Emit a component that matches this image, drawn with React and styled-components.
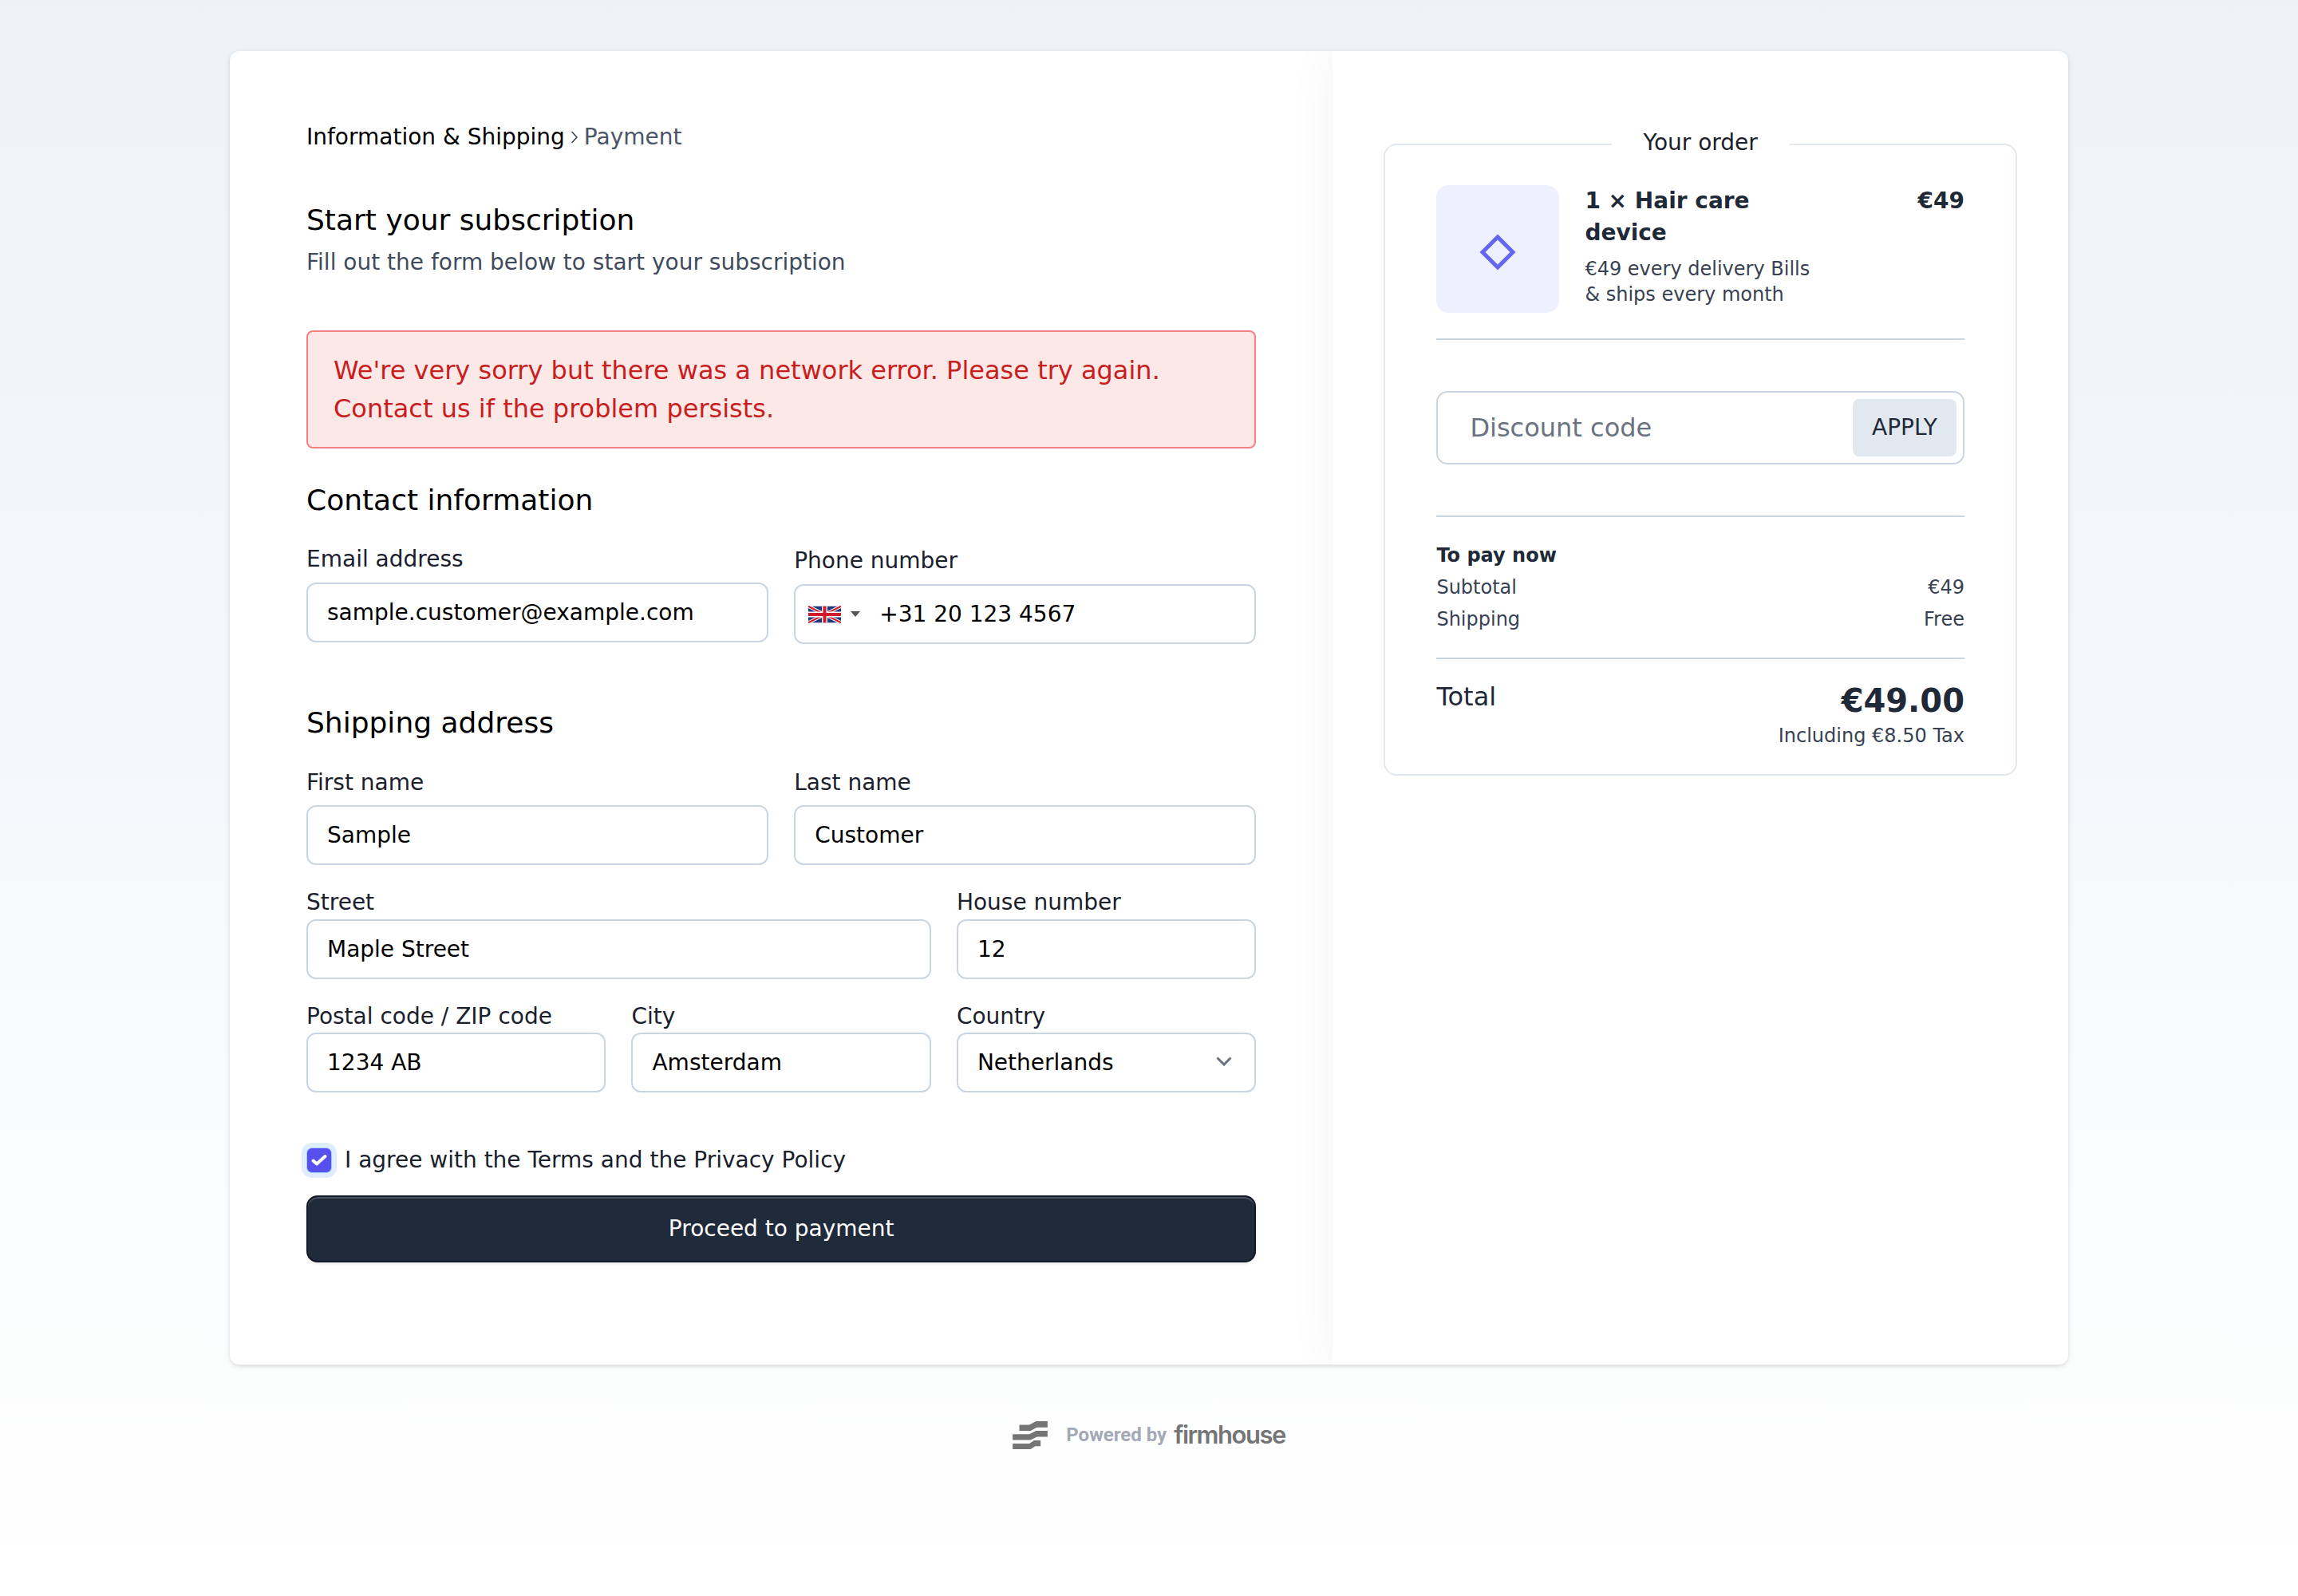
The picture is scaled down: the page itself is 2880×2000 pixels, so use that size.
// App.jsx
import React from "react";
import styled, { createGlobalStyle } from "styled-components";

const GlobalStyle = createGlobalStyle`
  * { box-sizing: border-box; }
  body {
    margin: 0;
    font-family: "DejaVu Sans", sans-serif;
    color: #1a202c;
  }
`;

const Page = styled.div`
  min-height: 2000px;
  padding-top: 64px;
  background: linear-gradient(180deg, #edf2f7 0%, #ffffff 100%);
`;

const Card = styled.main`
  width: 2304px;
  margin: 0 auto;
  display: flex;
  background: #fff;
  border-radius: 12px;
  box-shadow: 0 2px 6px rgba(0, 0, 0, 0.1), 0 2px 4px rgba(0, 0, 0, 0.06);
  overflow: hidden;
`;

/* Left column: the form */
const FormColumn = styled.section`
  width: 60%;
  padding: 88px 96px 128px;
`;

const Breadcrumb = styled.nav`
  display: flex;
  align-items: center;
  gap: 7px;
  font-size: 28px;
  line-height: 40px;
  color: #000;
`;

const Crumb = styled.span`
  color: ${(p) => (p.$muted ? "#4a5568" : "#000")};
`;

const Heading = styled.h2`
  margin: ${(p) => p.$top}px 0 0;
  font-size: 36px;
  line-height: 56px;
  font-weight: 400;
  color: #000;
`;

const Subtitle = styled.p`
  margin: 5px 0 0;
  font-size: 28px;
  line-height: 40px;
  color: #3f4b5c;
`;

const Alert = styled.div`
  margin-top: 65px;
  padding: 24px 32px;
  border: 2px solid #f98080;
  border-radius: 8px;
  background: #fde8e8;
  color: #c81e1e;
  font-size: 32px;
  line-height: 48px;
`;

const FieldGrid = styled.div`
  display: grid;
  grid-template-columns: repeat(6, 1fr);
  column-gap: 32px;
  row-gap: 27px;
  margin-top: ${(p) => p.$top}px;
`;

const Field = styled.div`
  grid-column: span ${(p) => p.$span};
  padding-top: ${(p) => p.$offset || 0}px;
`;

const Label = styled.label`
  display: block;
  margin-bottom: ${(p) => p.$gap}px;
  font-size: 28px;
  line-height: 40px;
  color: #1a202c;
`;

const TextInput = styled.input`
  display: block;
  width: 100%;
  height: 75px;
  padding: 0 24px;
  border: 2px solid #cbd5e0;
  border-radius: 12px;
  background: #fff;
  color: #000;
  font: 28px/40px "DejaVu Sans", sans-serif;
  outline: none;
`;

const PhoneBox = styled.div`
  display: flex;
  align-items: center;
  height: 75px;
  padding: 0 14px 0 16px;
  border: 2px solid #cbd5e0;
  border-radius: 12px;
`;

const FlagButton = styled.div`
  display: flex;
  align-items: center;
  gap: 12px;
  margin-right: 24px;
`;

const Caret = styled.span`
  width: 0;
  height: 0;
  border-left: 6px solid transparent;
  border-right: 6px solid transparent;
  border-top: 7px solid #555;
`;

const PhoneInput = styled.input`
  flex: 1;
  min-width: 0;
  padding: 0;
  border: 0;
  color: #000;
  font: 28px/40px "DejaVu Sans", sans-serif;
  outline: none;
`;

const SelectWrap = styled.div`
  position: relative;
`;

const Select = styled.select`
  display: block;
  width: 100%;
  height: 75px;
  padding: 0 24px;
  border: 2px solid #cbd5e0;
  border-radius: 12px;
  background: #fff;
  color: #000;
  font: 28px/40px "DejaVu Sans", sans-serif;
  appearance: none;
  outline: none;
`;

const SelectChevron = styled.svg`
  position: absolute;
  top: 30px;
  right: 30px;
  pointer-events: none;
`;

const AgreeRow = styled.label`
  display: flex;
  align-items: center;
  gap: 17px;
  margin-top: 65px;
  font-size: 28px;
  line-height: 40px;
  color: #1a202c;
`;

const CheckBox = styled.span`
  display: flex;
  align-items: center;
  justify-content: center;
  width: 30px;
  height: 30px;
  margin-left: 1px;
  border-radius: 6px;
  background: #5850ec;
  box-shadow: 0 0 0 1px #a4cafe, 0 0 0 7px rgba(164, 202, 254, 0.35);
`;

const SubmitButton = styled.button`
  display: block;
  width: 100%;
  height: 84px;
  margin-top: 24px;
  border: 2px solid #111827;
  border-radius: 14px;
  background: #1f2a3a;
  box-shadow: inset 0 2px 0 rgba(255, 255, 255, 0.2), 0 2px 4px rgba(0, 0, 0, 0.08);
  color: #fff;
  font: 28px/40px "DejaVu Sans", sans-serif;
`;

/* Right column: order summary */
const SummaryColumn = styled.aside`
  width: 40%;
  padding: 95px 64px 96px;
  box-shadow: 0 0 56px rgba(0, 0, 0, 0.06);
`;

const OrderBox = styled.fieldset`
  margin: 0;
  padding: 29px 64px 32px;
  border: 2px solid #e2e8f0;
  border-radius: 16px;
`;

const OrderLegend = styled.legend`
  margin: 0 auto;
  padding: 0 40px 4px;
  font-size: 28px;
  line-height: 40px;
  color: #1a202c;
`;

const ProductRow = styled.div`
  display: flex;
  align-items: flex-start;
  padding-bottom: 32px;
  border-bottom: 2px solid #cbd5e0;
`;

const ProductImage = styled.div`
  flex: none;
  display: flex;
  align-items: center;
  justify-content: center;
  width: 154px;
  height: 160px;
  padding-top: 7px;
  border-radius: 16px;
  background: #edf0fd;
`;

const ProductText = styled.div`
  width: 300px;
  margin-left: 32px;
`;

const ProductName = styled.div`
  font-size: 28px;
  line-height: 40px;
  font-weight: 700;
  color: #1f2937;
`;

const ProductNote = styled.div`
  margin-top: 9px;
  font-size: 24px;
  line-height: 32px;
  color: #374151;
`;

const ProductPrice = styled(ProductName)`
  margin-left: auto;
`;

const DiscountBox = styled.div`
  display: flex;
  align-items: center;
  height: 92px;
  margin: 64px 0;
  padding: 0 8px 0 40px;
  border: 2px solid #cbd5e0;
  border-radius: 14px;
`;

const DiscountInput = styled.input`
  flex: 1;
  min-width: 0;
  padding: 0;
  border: 0;
  font: 32px/48px "DejaVu Sans", sans-serif;
  outline: none;
  &::placeholder {
    color: #6b7280;
    opacity: 1;
  }
`;

const ApplyButton = styled.button`
  width: 130px;
  height: 72px;
  padding: 0;
  border: 0;
  border-radius: 8px;
  background: #e2e8f0;
  color: #1f2937;
  font: 28px/40px "DejaVu Sans", sans-serif;
`;

const Totals = styled.div`
  padding: 28px 0 28px;
  border-top: 2px solid #cbd5e0;
  border-bottom: 2px solid #cbd5e0;
`;

const TotalsTitle = styled.div`
  font-size: 24px;
  line-height: 40px;
  font-weight: 700;
  color: #1f2937;
`;

const TotalsRow = styled.div`
  display: flex;
  justify-content: space-between;
  font-size: 24px;
  line-height: 40px;
  color: #374151;
`;

const GrandTotal = styled.div`
  display: flex;
  justify-content: space-between;
  align-items: flex-start;
  padding-top: 24px;
`;

const GrandLabel = styled.div`
  font-size: 32px;
  line-height: 46px;
  color: #1f2937;
`;

const GrandAmount = styled.div`
  text-align: right;
`;

const AmountValue = styled.div`
  font-size: 40px;
  line-height: 56px;
  font-weight: 700;
  color: #1f2937;
`;

const AmountNote = styled.div`
  font-size: 24px;
  line-height: 32px;
  color: #374151;
`;

/* Footer */
const Footer = styled.footer`
  display: flex;
  align-items: center;
  justify-content: center;
  margin-top: 70px;
`;

const PoweredBy = styled.span`
  margin-left: 23px;
  font-family: Roboto, sans-serif;
  font-size: 24px;
  font-weight: 700;
  color: #a3aab5;
`;

const BrandName = styled.span`
  margin-left: 9px;
  font-family: Inter, sans-serif;
  font-size: 31px;
  line-height: 36px;
  font-weight: 600;
  letter-spacing: -1.5px;
  color: #757575;
`;

function UkFlag() {
  return (
    <svg width="41" height="22" viewBox="0 0 60 30">
      <rect width="60" height="30" fill="#1f3a7d" />
      <path d="M0 0L60 30M60 0L0 30" stroke="#fff" strokeWidth="6" />
      <path d="M0 0L60 30M60 0L0 30" stroke="#cf1b2b" strokeWidth="3" />
      <path d="M30 0V30M0 15H60" stroke="#fff" strokeWidth="10" />
      <path d="M30 0V30M0 15H60" stroke="#cf1b2b" strokeWidth="6" />
    </svg>
  );
}

function FirmhouseMark() {
  return (
    <svg width="44" height="35" viewBox="88 62 130 104" fill="#757575">
      <path d="M113 75H150L175 62H218V85H178L155 98H113Z" />
      <path d="M88 110H150L175 98H218V120H178L155 132H88Z" />
      <path d="M88 145H150L168 133H192V155H172L155 166H88Z" />
    </svg>
  );
}

export default function App() {
  return (
    <Page>
      <GlobalStyle />
      <Card>
        <FormColumn>
          <Breadcrumb>
            <Crumb>Information &amp; Shipping</Crumb>
            <svg width="10" height="18" viewBox="0 0 10 18" fill="none">
              <path d="M1.5 2L8 9L1.5 16" stroke="#374151" strokeWidth="1.5" />
            </svg>
            <Crumb $muted>Payment</Crumb>
          </Breadcrumb>

          <Heading $top={56}>Start your subscription</Heading>
          <Subtitle>Fill out the form below to start your subscription</Subtitle>

          <Alert>
            We're very sorry but there was a network error. Please try again.
            <br />
            Contact us if the problem persists.
          </Alert>

          <Heading $top={37}>Contact information</Heading>
          <FieldGrid $top={26}>
            <Field $span={3}>
              <Label $gap={9}>Email address</Label>
              <TextInput defaultValue="sample.customer@example.com" />
            </Field>
            <Field $span={3} $offset={2}>
              <Label $gap={9}>Phone number</Label>
              <PhoneBox>
                <FlagButton>
                  <UkFlag />
                  <Caret />
                </FlagButton>
                <PhoneInput defaultValue="+31 20 123 4567" />
              </PhoneBox>
            </Field>
          </FieldGrid>

          <Heading $top={71}>Shipping address</Heading>
          <FieldGrid $top={27}>
            <Field $span={3}>
              <Label $gap={8}>First name</Label>
              <TextInput defaultValue="Sample" />
            </Field>
            <Field $span={3}>
              <Label $gap={8}>Last name</Label>
              <TextInput defaultValue="Customer" />
            </Field>
            <Field $span={4}>
              <Label $gap={1}>Street</Label>
              <TextInput defaultValue="Maple Street" />
            </Field>
            <Field $span={2}>
              <Label $gap={1}>House number</Label>
              <TextInput defaultValue="12" />
            </Field>
            <Field $span={2}>
              <Label $gap={0}>Postal code / ZIP code</Label>
              <TextInput defaultValue="1234 AB" />
            </Field>
            <Field $span={2}>
              <Label $gap={0}>City</Label>
              <TextInput defaultValue="Amsterdam" />
            </Field>
            <Field $span={2}>
              <Label $gap={0}>Country</Label>
              <SelectWrap>
                <Select defaultValue="Netherlands">
                  <option>Netherlands</option>
                </Select>
                <SelectChevron width="20" height="12" viewBox="0 0 20 12" fill="none">
                  <path d="M1.5 1.5L10 10L18.5 1.5" stroke="#6b7280" strokeWidth="3" />
                </SelectChevron>
              </SelectWrap>
            </Field>
          </FieldGrid>

          <AgreeRow>
            <CheckBox>
              <svg width="24" height="24" viewBox="0 0 24 24" fill="none">
                <path d="M4.5 12.5L9 16.5L19.5 7" stroke="#fff" strokeWidth="4" strokeLinecap="round" strokeLinejoin="round" />
              </svg>
            </CheckBox>
            I agree with the Terms and the Privacy Policy
          </AgreeRow>
          <SubmitButton>Proceed to payment</SubmitButton>
        </FormColumn>

        <SummaryColumn>
          <OrderBox>
            <OrderLegend>Your order</OrderLegend>
            <ProductRow>
              <ProductImage>
                <svg width="46" height="46" viewBox="0 0 46 46" fill="none">
                  <path d="M23 4L42 23L23 42L4 23Z" stroke="#6366f1" strokeWidth="5" />
                </svg>
              </ProductImage>
              <ProductText>
                <ProductName>1 × Hair care device</ProductName>
                <ProductNote>€49 every delivery Bills &amp; ships every month</ProductNote>
              </ProductText>
              <ProductPrice>€49</ProductPrice>
            </ProductRow>

            <DiscountBox>
              <DiscountInput placeholder="Discount code" />
              <ApplyButton>APPLY</ApplyButton>
            </DiscountBox>

            <Totals>
              <TotalsTitle>To pay now</TotalsTitle>
              <TotalsRow>
                <span>Subtotal</span>
                <span>€49</span>
              </TotalsRow>
              <TotalsRow>
                <span>Shipping</span>
                <span>Free</span>
              </TotalsRow>
            </Totals>

            <GrandTotal>
              <GrandLabel>Total</GrandLabel>
              <GrandAmount>
                <AmountValue>€49.00</AmountValue>
                <AmountNote>Including €8.50 Tax</AmountNote>
              </GrandAmount>
            </GrandTotal>
          </OrderBox>
        </SummaryColumn>
      </Card>

      <Footer>
        <FirmhouseMark />
        <PoweredBy>Powered by</PoweredBy>
        <BrandName>firmhouse</BrandName>
      </Footer>
    </Page>
  );
}
